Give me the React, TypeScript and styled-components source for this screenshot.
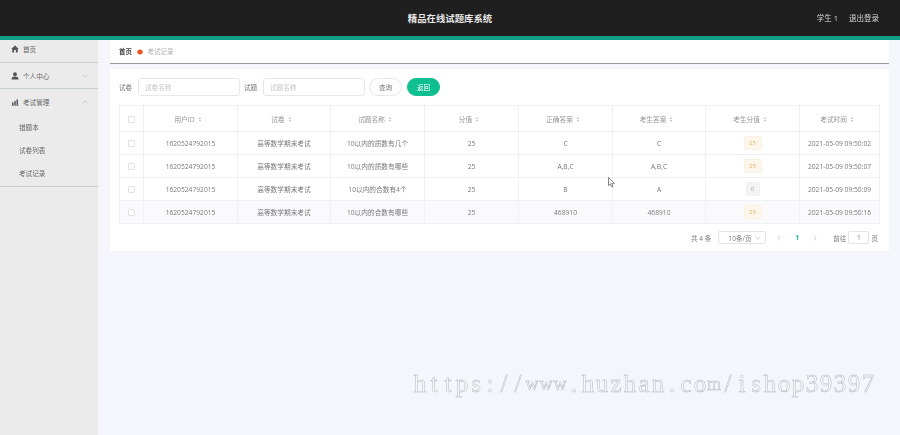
import React from 'react';
import styled, { createGlobalStyle } from 'styled-components';

const GlobalStyle = createGlobalStyle`
  html, body {
    margin: 0;
    padding: 0;
    height: 100%;
    overflow: hidden;
    background: #f4f6fb;
  }
  body, input, button {
    font-family: "Open Sans", "Noto Sans CJK SC", sans-serif;
  }
  * {
    box-sizing: border-box;
  }
`;

const Page = styled.div`
  position: relative;
  width: 900px;
  height: 435px;
  overflow: hidden;
  display: flex;
  flex-direction: column;
  filter: blur(0.35px);
`;

const Header = styled.header`
  height: 40px;
  flex: none;
  background: #1f1f1f;
  border-bottom: 4px solid #0f9d88;
  display: flex;
  align-items: center;
  justify-content: center;
  position: relative;
`;

const Title = styled.h1`
  margin: 0;
  font-size: 9.4px;
  font-weight: 700;
  color: #e8e8e8;
`;

const HeaderRight = styled.div`
  position: absolute;
  right: 21px;
  top: 13px;
  display: flex;
  gap: 11px;
  font-size: 7.5px;
  line-height: 10px;
  color: #d8d8d8;
`;

const Body = styled.div`
  flex: 1;
  display: flex;
  min-height: 0;
`;

const Sidebar = styled.nav`
  width: 98px;
  flex: none;
  background: #ebebeb;
`;

const MenuGroup = styled.div<{ $height: number }>`
  height: ${p => p.$height}px;
  border-bottom: 1px solid #c6cfcb;
`;

const MenuRow = styled.div<{ $height: number }>`
  height: ${p => p.$height}px;
  padding: 0 10px 0 11px;
  display: flex;
  align-items: center;
  gap: 4px;
  font-size: 6.6px;
  color: #666;
`;

const MenuLabel = styled.span`
  flex: 1;
`;

const SubItem = styled.div`
  height: 23px;
  padding-left: 19px;
  display: flex;
  align-items: center;
  font-size: 6.6px;
  color: #666;
`;

const Main = styled.main`
  flex: 1;
  min-width: 0;
  padding: 0 11px 0 12px;
`;

const Breadcrumb = styled.div`
  height: 24px;
  background: #fff;
  border-bottom: 1px solid #9a9a9a;
  padding: 0 0 0 9px;
  display: flex;
  align-items: center;
  gap: 5px;
  font-size: 6.4px;
`;

const Crumb = styled.span<{ $current?: boolean }>`
  color: ${p => (p.$current ? '#a9adb5' : '#444')};
  font-weight: ${p => (p.$current ? 400 : 600)};
`;

const Card = styled.section`
  margin-top: 5px;
  height: 182px;
  background: #fff;
  padding: 9px 10px 0 9px;
`;

const SearchRow = styled.div`
  height: 18px;
  display: flex;
  align-items: center;
  font-size: 6.6px;
  color: #777;
`;

const SearchLabel = styled.label`
  width: 19px;
  flex: none;
`;

const SearchInput = styled.div`
  width: 102px;
  height: 18px;
  margin-right: 4px;
  padding-left: 6px;
  display: flex;
  align-items: center;
  border: 1px solid #e6e8ec;
  border-radius: 3px;
  color: #c0c4cc;
  background: #fff;
`;

const PillButton = styled.button<{ $primary?: boolean }>`
  width: 33px;
  height: 18px;
  margin-right: 5px;
  padding: 0;
  font-size: 6.6px;
  border-radius: 9px;
  border: 1px solid ${p => (p.$primary ? '#10bf8f' : '#e6e8ec')};
  background: ${p => (p.$primary ? '#10bf8f' : '#fff')};
  color: ${p => (p.$primary ? '#fff' : '#777')};
`;

const Table = styled.table`
  margin-top: 9px;
  width: 760px;
  table-layout: fixed;
  border-collapse: collapse;
  font-size: 6.7px;
  color: #77797e;
`;

const Col = styled.col<{ $width: number }>`
  width: ${p => p.$width}px;
`;

const HeadCell = styled.th`
  height: 26px;
  padding: 0;
  border: 1px solid #eef0f3;
  font-weight: 400;
  color: #92959b;
  text-align: center;
`;

const Row = styled.tr<{ $striped?: boolean }>`
  background: ${p => (p.$striped ? '#fafafc' : '#fff')};
`;

const Cell = styled.td`
  height: 23px;
  padding: 0;
  border: 1px solid #eef0f3;
  text-align: center;
  white-space: nowrap;
`;

const Check = styled.span`
  display: inline-block;
  width: 7px;
  height: 7px;
  vertical-align: middle;
  border: 1px solid #dfe2e7;
  border-radius: 1px;
  background: #fff;
`;

const SortCaret = styled.span`
  display: inline-flex;
  flex-direction: column;
  gap: 1px;
  margin: 0 6px 0 4px;
  vertical-align: middle;

  &::before, &::after {
    content: "";
    width: 0;
    height: 0;
    border-left: 1.5px solid transparent;
    border-right: 1.5px solid transparent;
  }
  &::before {
    border-bottom: 2px solid #b4b7bd;
  }
  &::after {
    border-top: 2px solid #b4b7bd;
  }
`;

const ScoreTag = styled.span<{ $zero?: boolean }>`
  display: inline-flex;
  align-items: center;
  justify-content: center;
  width: ${p => (p.$zero ? 14 : 18)}px;
  height: 14px;
  border-radius: 2px;
  font-size: 6px;
  border: 1px solid ${p => (p.$zero ? '#f0f0f2' : '#fcf1e2')};
  background: ${p => (p.$zero ? '#f4f4f5' : '#fdf6ec')};
  color: ${p => (p.$zero ? '#a3a6ab' : '#e8b163')};
`;

const Pager = styled.div`
  margin-top: 7px;
  display: flex;
  align-items: center;
  justify-content: flex-end;
  padding-right: 1px;
  font-size: 6.6px;
  color: #777;
`;

const PageSize = styled.div`
  width: 48px;
  height: 13px;
  margin: 0 10px 0 7px;
  padding: 0 4px 0 9px;
  display: flex;
  align-items: center;
  justify-content: space-between;
  border: 1px solid #e2e4e8;
  border-radius: 2px;
`;

const PageArrow = styled.svg`
  width: 6px;
  height: 6px;
  fill: none;
  stroke: #b0b3b9;
  stroke-width: 1;
`;

const PageNumber = styled.span`
  margin: 0 13px;
  color: #10bf8f;
  font-weight: 700;
`;

const PageJump = styled.div`
  width: 21px;
  height: 13px;
  margin: 0 2px;
  display: flex;
  align-items: center;
  justify-content: center;
  border: 1px solid #e2e4e8;
  border-radius: 2px;
`;

const GotoLabel = styled.span`
  margin-left: 15px;
`;

const Watermark = styled.div`
  position: absolute;
  left: 413px;
  top: 369px;
  display: flex;
  font-family: "Liberation Serif", serif;
  font-size: 25px;
  line-height: 30px;
  white-space: nowrap;
  color: #f6f7fb;
  -webkit-text-stroke: 0.45px #b0b2b7;
`;

const WatermarkChar = styled.span<{ $narrow?: boolean }>`
  display: inline-block;
  flex: none;
  width: 14px;
  text-align: center;
  font-size: ${p => (p.$narrow ? 18 : 25)}px;
`;

const Pointer = styled.svg`
  position: absolute;
  left: 608px;
  top: 177px;
  width: 7px;
  height: 11px;
`;

const HomeIcon = () => (
  <svg width="8" height="8" viewBox="0 0 16 16" fill="#555">
    <path d="M8 1 L15.5 8 L13.5 8 L13.5 15 L9.8 15 L9.8 10 L6.2 10 L6.2 15 L2.5 15 L2.5 8 L.5 8 Z" />
  </svg>
);

const UserIcon = () => (
  <svg width="8" height="8" viewBox="0 0 16 16" fill="#555">
    <circle cx="8" cy="4.5" r="3.8" />
    <path d="M1 15 C1 10.5 4 9.2 8 9.2 C12 9.2 15 10.5 15 15 Z" />
  </svg>
);

const ChartIcon = () => (
  <svg width="8" height="8" viewBox="0 0 16 16" fill="#555">
    <path d="M1 14.5 H15.5 V15.5 H1 Z M2 9 H5 V14 H2 Z M6.5 6 H9.5 V14 H6.5 Z M11 3 H14 V14 H11 Z" />
  </svg>
);

const Chevron = ({ up }: { up?: boolean }) => (
  <svg width="6" height="6" viewBox="0 0 10 10" fill="none" stroke="#a9b0ae" strokeWidth="1">
    <path d={up ? 'M1 7 L5 3 L9 7' : 'M1 3 L5 7 L9 3'} />
  </svg>
);

const CrumbDot = () => (
  <svg width="6" height="6" viewBox="0 0 10 10" fill="#f2521f">
    <path d="M5 .5 L9.5 3 V7 L5 9.5 L.5 7 V3 Z" />
  </svg>
);

const columns = [24, 94, 93, 94, 94, 94, 93, 94, 80];

const headers = ['用户ID', '试卷', '试题名称', '分值', '正确答案', '考生答案', '考生分值', '考试时间'];

const rows = [
  { question: '10以内的质数有几个', right: 'C', answer: 'C', score: 25, time: '2021-05-09 09:50:02' },
  { question: '10以内的质数有哪些', right: 'A,B,C', answer: 'A,B,C', score: 25, time: '2021-05-09 09:50:07' },
  { question: '10以内的合数有4个', right: 'B', answer: 'A', score: 0, time: '2021-05-09 09:50:09' },
  { question: '10以内的合数有哪些', right: '468910', answer: '468910', score: 25, time: '2021-05-09 09:50:16' },
];

const watermark = 'https://www.huzhan.com/ishop39397';

const App: React.FC = () => {
  return (
    <Page>
      <GlobalStyle />
      <Header>
        <Title>精品在线试题库系统</Title>
        <HeaderRight>
          <span>学生 1</span>
          <span>退出登录</span>
        </HeaderRight>
      </Header>

      <Body>
        <Sidebar>
          <MenuGroup $height={23}>
            <MenuRow $height={18}>
              <HomeIcon />
              <MenuLabel>首页</MenuLabel>
            </MenuRow>
          </MenuGroup>
          <MenuGroup $height={26}>
            <MenuRow $height={25}>
              <UserIcon />
              <MenuLabel>个人中心</MenuLabel>
              <Chevron />
            </MenuRow>
          </MenuGroup>
          <MenuGroup $height={98}>
            <MenuRow $height={26}>
              <ChartIcon />
              <MenuLabel>考试管理</MenuLabel>
              <Chevron up />
            </MenuRow>
            <SubItem>错题本</SubItem>
            <SubItem>试卷列表</SubItem>
            <SubItem>考试记录</SubItem>
          </MenuGroup>
        </Sidebar>

        <Main>
          <Breadcrumb>
            <Crumb>首页</Crumb>
            <CrumbDot />
            <Crumb $current>考试记录</Crumb>
          </Breadcrumb>

          <Card>
            <SearchRow>
              <SearchLabel>试卷</SearchLabel>
              <SearchInput>试卷名称</SearchInput>
              <SearchLabel>试题</SearchLabel>
              <SearchInput>试题名称</SearchInput>
              <PillButton>查询</PillButton>
              <PillButton $primary>返回</PillButton>
            </SearchRow>

            <Table>
              <colgroup>
                {columns.map((width, i) => (
                  <Col key={i} $width={width} />
                ))}
              </colgroup>
              <thead>
                <tr>
                  <HeadCell>
                    <Check />
                  </HeadCell>
                  {headers.map(h => (
                    <HeadCell key={h}>
                      {h}
                      <SortCaret />
                    </HeadCell>
                  ))}
                </tr>
              </thead>
              <tbody>
                {rows.map((r, i) => (
                  <Row key={r.time} $striped={i === 3}>
                    <Cell>
                      <Check />
                    </Cell>
                    <Cell>1620524792015</Cell>
                    <Cell>高等数学期末考试</Cell>
                    <Cell>{r.question}</Cell>
                    <Cell>25</Cell>
                    <Cell>{r.right}</Cell>
                    <Cell>{r.answer}</Cell>
                    <Cell>
                      <ScoreTag $zero={r.score === 0}>{r.score}</ScoreTag>
                    </Cell>
                    <Cell>{r.time}</Cell>
                  </Row>
                ))}
              </tbody>
            </Table>

            <Pager>
              <span>共 4 条</span>
              <PageSize>
                <span>10条/页</span>
                <Chevron />
              </PageSize>
              <PageArrow viewBox="0 0 10 10">
                <path d="M7 1 L3 5 L7 9" />
              </PageArrow>
              <PageNumber>1</PageNumber>
              <PageArrow viewBox="0 0 10 10">
                <path d="M3 1 L7 5 L3 9" />
              </PageArrow>
              <GotoLabel>前往</GotoLabel>
              <PageJump>1</PageJump>
              <span>页</span>
            </Pager>
          </Card>
        </Main>
      </Body>

      <Pointer viewBox="0 0 7 11">
        <path d="M.5 .5 L.5 8.5 L2.4 6.8 L3.8 10 L5 9.4 L3.7 6.4 L6.3 6.2 Z" fill="#fff" stroke="#555" strokeWidth=".7" />
      </Pointer>
      <Watermark>
        {watermark.split('').map((ch, i) => (
          <WatermarkChar key={i} $narrow={ch === 'w' || ch === 'm'}>
            {ch}
          </WatermarkChar>
        ))}
      </Watermark>
    </Page>
  );
};

export default App;
